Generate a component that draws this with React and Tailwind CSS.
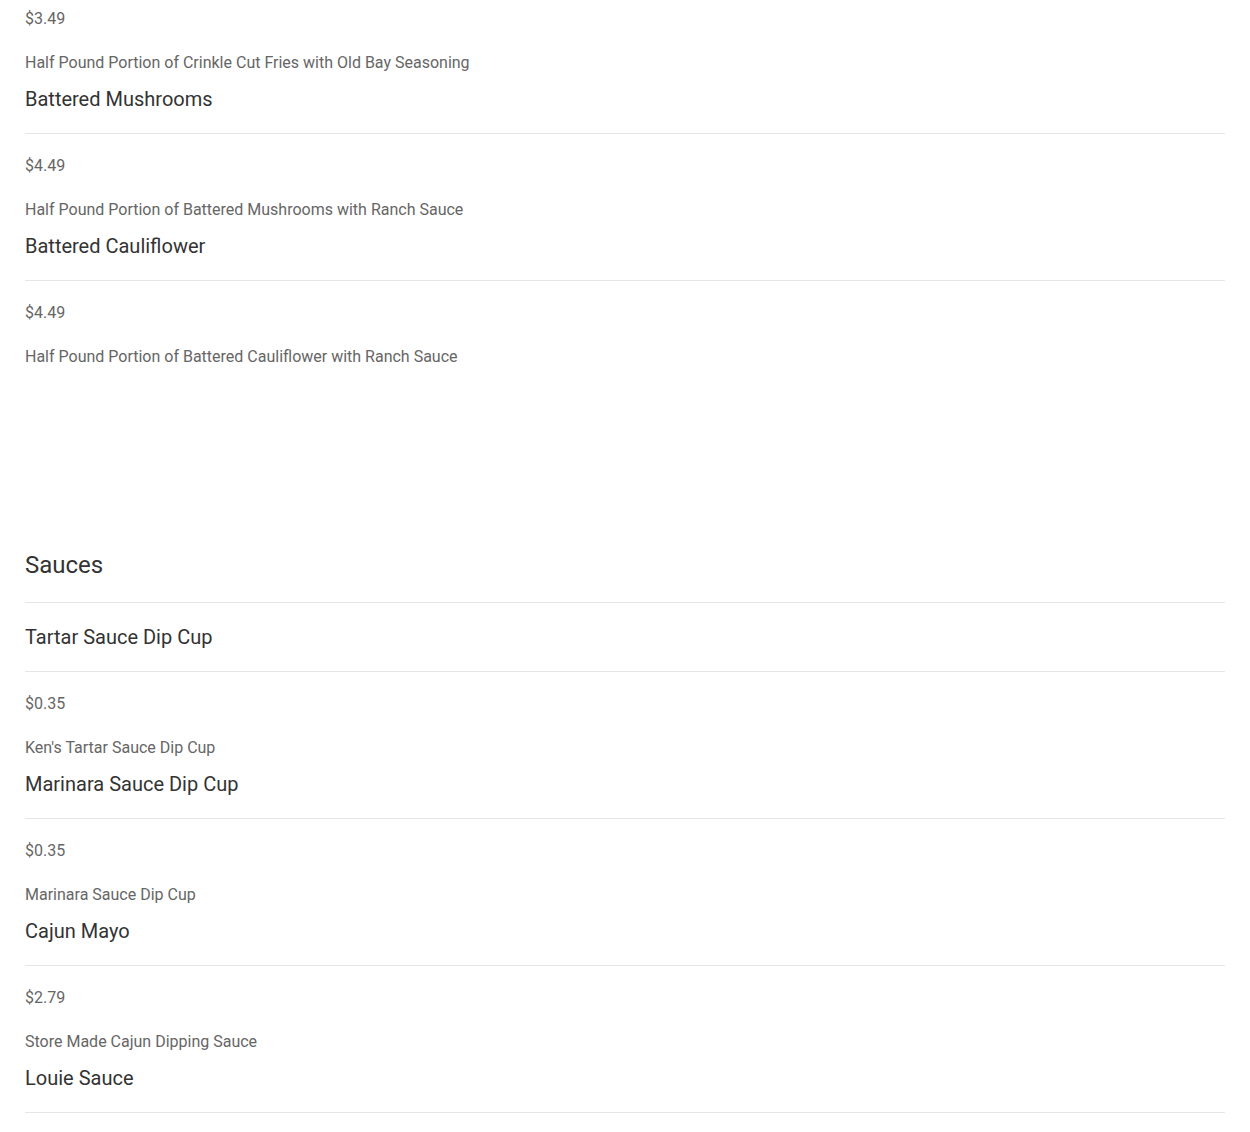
import React from "react";

function Divider({ className = "mt-[20px]" }) {
  return <div className={`${className} h-px bg-[#e5e5e5]`} />;
}

function Price({ children }) {
  return <p className="mt-[20px] text-[16px] leading-6 text-[#666]">{children}</p>;
}

function Desc({ children }) {
  return <p className="mt-[20px] text-[16px] leading-6 text-[#666]">{children}</p>;
}

function Title({ children, className = "mt-[10px]" }) {
  return <h3 className={`${className} text-[20px] leading-7 text-[#333]`}>{children}</h3>;
}

export default function App() {
  return (
    <div className="bg-white px-[25px] pt-[7px] pb-[20px] font-['Roboto',sans-serif]">
      <p className="text-[16px] leading-6 text-[#666]">$3.49</p>
      <Desc>Half Pound Portion of Crinkle Cut Fries with Old Bay Seasoning</Desc>
      <Title>Battered Mushrooms</Title>
      <Divider />
      <Price>$4.49</Price>
      <Desc>Half Pound Portion of Battered Mushrooms with Ranch Sauce</Desc>
      <Title>Battered Cauliflower</Title>
      <Divider />
      <Price>$4.49</Price>
      <Desc>Half Pound Portion of Battered Cauliflower with Ranch Sauce</Desc>

      <h2 className="mt-[180px] text-[24px] leading-8 text-[#333]">Sauces</h2>
      <Divider className="mt-[21px]" />
      <Title className="mt-[20px]">Tartar Sauce Dip Cup</Title>
      <Divider className="mt-[20px]" />
      <Price>$0.35</Price>
      <Desc>Ken's Tartar Sauce Dip Cup</Desc>
      <Title>Marinara Sauce Dip Cup</Title>
      <Divider />
      <Price>$0.35</Price>
      <Desc>Marinara Sauce Dip Cup</Desc>
      <Title>Cajun Mayo</Title>
      <Divider />
      <Price>$2.79</Price>
      <Desc>Store Made Cajun Dipping Sauce</Desc>
      <Title>Louie Sauce</Title>
      <Divider />
    </div>
  );
}
